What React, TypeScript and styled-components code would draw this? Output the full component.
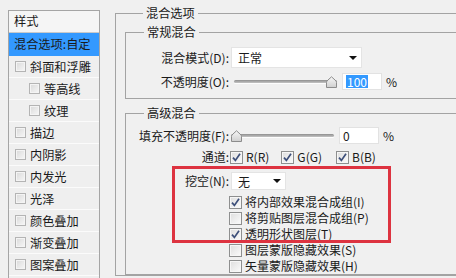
import styled, { createGlobalStyle } from "styled-components";

const GlobalStyle = createGlobalStyle`
  html, body {
    margin: 0;
    padding: 0;
    background: #f0f0f0;
    overflow: hidden;
  }
  body {
    width: 456px;
    height: 278px;
    font-family: "Noto Sans CJK SC", "Noto Sans", sans-serif;
    font-size: 12px;
    color: #1a1a1a;
  }
`;

const Dialog = styled.div`
  position: relative;
  display: flex;
  align-items: flex-start;
  gap: 15px;
  padding-left: 8px;
  box-sizing: border-box;
  width: 456px;
  height: 278px;
  overflow: hidden;
`;

/* ---------- left style list ---------- */

const Sidebar = styled.div`
  margin-top: 10px;
  width: 92px;
  height: 268px;
  flex: none;
  overflow: hidden;
  border: 1px solid #a5a5a5;
  border-bottom: none;
  box-sizing: border-box;
  background: #efefef;
  font-size: 12.2px;
`;

const SideHeader = styled.div`
  height: 21px;
  line-height: 21px;
  padding-left: 5px;
  background: #f5f5f5;
  border-bottom: 1px solid #c9c9c9;
`;

const SideItem = styled.div<{ $active?: boolean; $indent?: boolean }>`
  display: flex;
  align-items: center;
  gap: 4px;
  height: ${({ $active }) => ($active ? 22 : 21)}px;
  padding-left: ${({ $active, $indent }) => ($active ? 5 : $indent ? 20 : 6)}px;
  background: ${({ $active }) => ($active ? "#3399ff" : "transparent")};
  border-bottom: 1px solid ${({ $active }) => ($active ? "#3399ff" : "#fbfbfb")};
  white-space: nowrap;
`;

const SideBox = styled.span`
  width: 9px;
  height: 9px;
  flex: none;
  border: 1px solid #b4b4b4;
  background: linear-gradient(135deg, #d9d9d9, #f7f7f7);
  box-shadow: inset 0 0 0 1px #f4f4f4;
`;

/* ---------- right panel ---------- */

const Group = styled.fieldset<{ $top: number; $pad: string; $width: number }>`
  margin: ${({ $top }) => `${$top}px 0 0 0`};
  padding: ${({ $pad }) => $pad};
  width: ${({ $width }) => $width}px;
  min-width: 0;
  flex: none;
  box-sizing: border-box;
  border: 1px solid #a3a3a3;
  border-radius: 0;
`;

const Legend = styled.legend`
  margin-left: 18px;
  padding: 0 3px;
  line-height: 16px;
  font-size: 12.2px;
  color: #1a1a1a;
`;

const Row = styled.div<{ $gap?: number; $mt?: number }>`
  display: flex;
  align-items: center;
  gap: ${({ $gap }) => $gap ?? 2}px;
  margin-top: ${({ $mt }) => $mt ?? 0}px;
  white-space: nowrap;
`;

const Label = styled.span`
  width: 103px;
  flex: none;
  text-align: right;
  line-height: 16px;
`;

const Select = styled.div<{ $width: number; $height: number }>`
  width: ${({ $width }) => $width}px;
  height: ${({ $height }) => $height}px;
  box-sizing: border-box;
  display: flex;
  align-items: center;
  justify-content: space-between;
  padding: 0 4px 0 6px;
  background: #fff;
  border: 1px solid #e4e4e4;
`;

const Caret = styled.span`
  width: 0;
  height: 0;
  border-left: 4px solid transparent;
  border-right: 4px solid transparent;
  border-top: 4px solid #111;
`;

const Track = styled.div<{ $ml: number }>`
  position: relative;
  width: 103px;
  height: 17px;
  margin-left: ${({ $ml }) => $ml}px;
  flex: none;
  display: flex;
  align-items: center;
`;

const Bar = styled.div`
  width: 100%;
  height: 3px;
  border-radius: 2px;
  background: linear-gradient(#8e8e8e, #c4c4c4);
  box-shadow: 0 1px 0 #fdfdfd;
`;

const Thumb = styled.svg<{ $at: number }>`
  position: absolute;
  left: ${({ $at }) => $at}px;
  top: 3px;
`;

const NumInput = styled.div`
  width: 40px;
  height: 17px;
  box-sizing: border-box;
  margin-left: 5px;
  padding-left: 3px;
  display: flex;
  align-items: center;
  background: #fff;
  border: 1px solid #e2e2e2;
  font-size: 12px;
`;

const Selected = styled.span`
  background: #3399ff;
  color: #fff;
  padding: 0 1px;
  line-height: 13px;
`;

const Percent = styled.span`
  margin-left: 4px;
`;

const Check = styled.span`
  width: 13px;
  height: 13px;
  flex: none;
  box-sizing: border-box;
  border: 1px solid #8e8f8f;
  background: linear-gradient(135deg, #dedede, #fbfbfb);
  box-shadow: inset 0 0 0 1px #f6f6f6;
  display: flex;
  align-items: center;
  justify-content: center;
`;

const CheckItem = styled.label<{ $ml?: number }>`
  display: flex;
  align-items: center;
  gap: 3px;
  height: 16px;
  line-height: 16px;
  margin-left: ${({ $ml }) => $ml ?? 0}px;
`;

const CheckList = styled.div`
  margin-top: 4px;
  padding-left: 103px;
  display: flex;
  flex-direction: column;
  white-space: nowrap;
`;

const Highlight = styled.div`
  position: absolute;
  left: 172px;
  top: 166px;
  width: 219px;
  height: 77px;
  box-sizing: border-box;
  border: 3px solid #dd3340;
  pointer-events: none;
`;

const Tick = () => (
  <svg width="9" height="9" viewBox="0 0 9 9">
    <path d="M1 4.6 L3.4 7.4 L8 0.8" fill="none" stroke="#3d4f7a" strokeWidth="1.7" />
  </svg>
);

const Box = ({ on }: { on?: boolean }) => <Check>{on && <Tick />}</Check>;

const SliderThumb = ({ at }: { at: number }) => (
  <Thumb $at={at} width="11" height="12" viewBox="0 0 11 12">
    <defs>
      <linearGradient id={`tg${at}`} x1="0" y1="0" x2="0" y2="1">
        <stop offset="0" stopColor="#f7f7f7" />
        <stop offset="1" stopColor="#cfcfcf" />
      </linearGradient>
    </defs>
    <path
      d="M0.5 11.5 V6.5 Q0.5 5 2 4 L5.5 0.8 L9 4 Q10.5 5 10.5 6.5 V11.5 Z"
      fill={`url(#tg${at})`}
      stroke="#8c8c8c"
    />
  </Thumb>
);

const styles: { name: string; indent?: boolean }[] = [
  { name: "斜面和浮雕" },
  { name: "等高线", indent: true },
  { name: "纹理", indent: true },
  { name: "描边" },
  { name: "内阴影" },
  { name: "内发光" },
  { name: "光泽" },
  { name: "颜色叠加" },
  { name: "渐变叠加" },
  { name: "图案叠加" },
];

const knockoutOptions: { text: string; on: boolean }[] = [
  { text: "将内部效果混合成组(I)", on: true },
  { text: "将剪贴图层混合成组(P)", on: false },
  { text: "透明形状图层(T)", on: true },
  { text: "图层蒙版隐藏效果(S)", on: false },
  { text: "矢量蒙版隐藏效果(H)", on: false },
];

export default function App() {
  return (
    <>
      <GlobalStyle />
      <Dialog>
        <Sidebar>
          <SideHeader>样式</SideHeader>
          <SideItem $active>混合选项:自定</SideItem>
          {styles.map((s) => (
            <SideItem key={s.name} $indent={s.indent}>
              <SideBox />
              {s.name}
            </SideItem>
          ))}
        </Sidebar>

        <Group $top={5} $pad="3px 0 0 9px" $width={420}>
          <Legend>混合选项</Legend>

          <Group $top={0} $pad="7px 0 8px 0" $width={400}>
            <Legend>常规混合</Legend>
            <Row>
              <Label>混合模式(D):</Label>
              <Select $width={131} $height={21}>
                正常
                <Caret />
              </Select>
            </Row>
            <Row $mt={5} $gap={0}>
              <Label>不透明度(O):</Label>
              <Track $ml={5}>
                <Bar />
                <SliderThumb at={92} />
              </Track>
              <NumInput>
                <Selected>100</Selected>
              </NumInput>
              <Percent>%</Percent>
            </Row>
          </Group>

          <Group $top={6} $pad="6px 0 0 0" $width={400}>
            <Legend>高级混合</Legend>
            <Row $gap={0}>
              <Label>填充不透明度(F):</Label>
              <Track $ml={2}>
                <Bar />
                <SliderThumb at={0} />
              </Track>
              <NumInput>0</NumInput>
              <Percent>%</Percent>
            </Row>
            <Row $mt={5} $gap={0}>
              <Label>通道:</Label>
              <CheckItem $ml={1}>
                <Box on />
                R(R)
              </CheckItem>
              <CheckItem $ml={12}>
                <Box on />
                G(G)
              </CheckItem>
              <CheckItem $ml={14}>
                <Box on />
                B(B)
              </CheckItem>
            </Row>
            <Row $mt={7}>
              <Label>挖空(N):</Label>
              <Select $width={55} $height={18}>
                无
                <Caret />
              </Select>
            </Row>
            <CheckList>
              {knockoutOptions.map((o) => (
                <CheckItem key={o.text}>
                  <Box on={o.on} />
                  {o.text}
                </CheckItem>
              ))}
            </CheckList>
          </Group>
        </Group>

        <Highlight />
      </Dialog>
    </>
  );
}
